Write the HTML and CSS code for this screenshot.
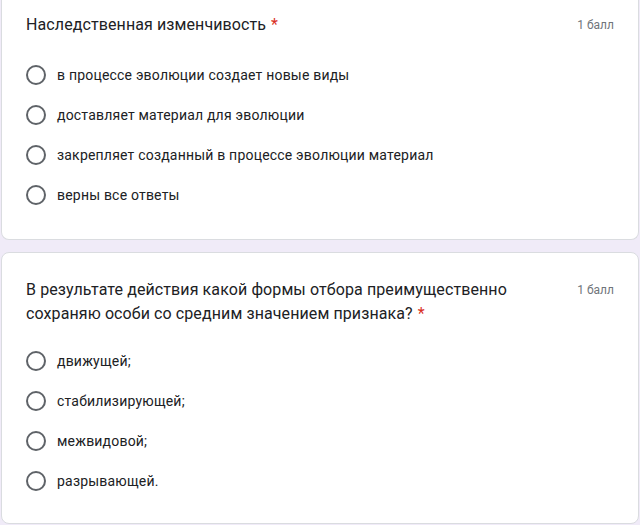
FILE: index.html
```html
<!DOCTYPE html>
<html lang="ru">
<head>
<meta charset="utf-8">
<link rel="stylesheet" href="styles.css">
</head>
<body>
<div class="page">
  <div class="card card--cut">
    <div class="head">
      <div class="title">Наследственная изменчивость<span class="req">*</span></div>
      <div class="points">1 балл</div>
    </div>
    <div class="options">
      <div class="opt"><span class="radio"></span><span class="label">в процессе эволюции создает новые виды</span></div>
      <div class="opt"><span class="radio"></span><span class="label">доставляет материал для эволюции</span></div>
      <div class="opt"><span class="radio"></span><span class="label">закрепляет созданный в процессе эволюции материал</span></div>
      <div class="opt"><span class="radio"></span><span class="label">верны все ответы</span></div>
    </div>
  </div>
  <div class="card">
    <div class="head">
      <div class="title">В результате действия какой формы отбора преимущественно сохраняю особи со средним значением признака?<span class="req">*</span></div>
      <div class="points">1 балл</div>
    </div>
    <div class="options">
      <div class="opt"><span class="radio"></span><span class="label">движущей;</span></div>
      <div class="opt"><span class="radio"></span><span class="label">стабилизирующей;</span></div>
      <div class="opt"><span class="radio"></span><span class="label">межвидовой;</span></div>
      <div class="opt"><span class="radio"></span><span class="label">разрывающей.</span></div>
    </div>
  </div>
</div>
</body>
</html>
```
FILE: styles.css
```css
html, body {
  margin: 0;
  padding: 0;
  background: #f0ebf8;
}
body {
  font-family: Roboto, "Noto Sans", Arial, sans-serif;
  color: #202124;
  width: 640px;
  height: 525px;
  overflow: hidden;
}
.page {
  display: flex;
  flex-direction: column;
  gap: 12px;
  padding: 0 1px;
}
.card {
  background: #fff;
  border: 1px solid #dadce0;
  border-radius: 8px;
  padding: 25px 24px 22px 24px;
}
.card--cut {
  border-top: none;
  border-top-left-radius: 0;
  border-top-right-radius: 0;
  padding-top: 13px;
  padding-bottom: 24px;
}
.head {
  display: flex;
  justify-content: space-between;
  align-items: flex-start;
  gap: 24px;
}
.title {
  font-size: 16px;
  line-height: 24px;
  letter-spacing: 0.1px;
  max-width: 500px;
}
.req {
  color: #d93025;
  margin-left: 5px;
}
.points {
  font-size: 12px;
  line-height: 24px;
  color: #70757a;
  white-space: nowrap;
}
.options {
  display: flex;
  flex-direction: column;
  margin-top: 15px;
}
.card--cut .options {
  margin-top: 18px;
}
.opt {
  display: flex;
  align-items: center;
  height: 40px;
}
.radio {
  box-sizing: border-box;
  width: 20px;
  height: 20px;
  border: 2px solid #5f6368;
  border-radius: 50%;
  flex: none;
  margin-right: 11px;
}
.label {
  font-size: 14px;
  letter-spacing: 0.2px;
}
```
